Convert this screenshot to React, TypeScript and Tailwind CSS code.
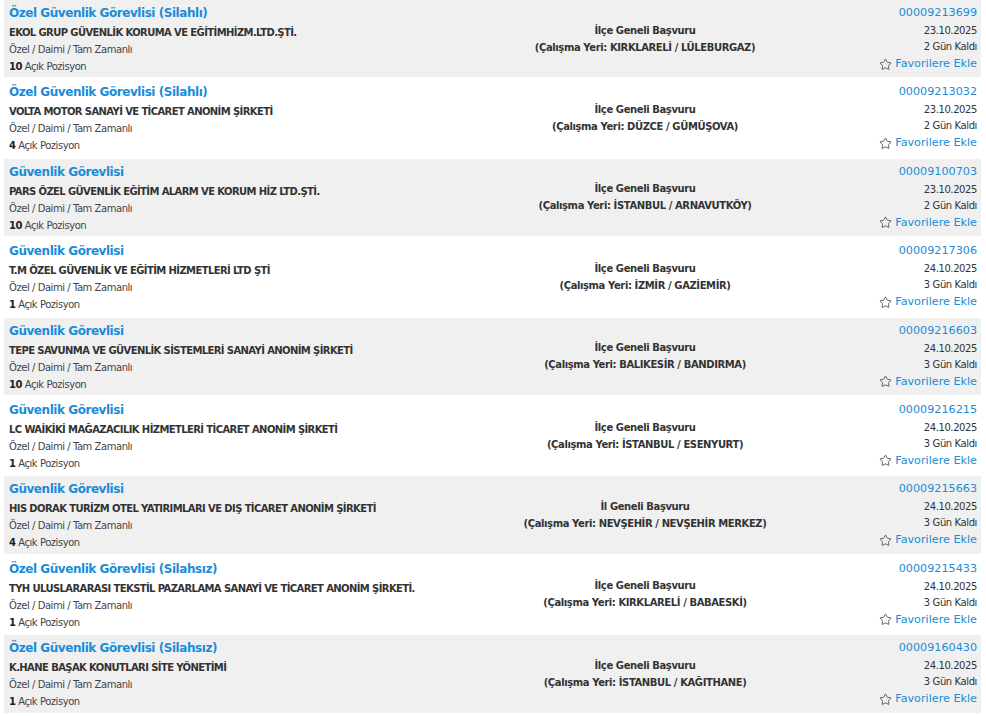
import { Star } from 'lucide-react';

const jobs = [
  { title: 'Özel Güvenlik Görevlisi (Silahlı)', company: 'EKOL GRUP GÜVENLİK KORUMA VE EĞİTİMHİZM.LTD.ŞTİ.', count: 10, scope: 'İlçe Geneli Başvuru', place: 'KIRKLARELİ / LÜLEBURGAZ', no: '00009213699', date: '23.10.2025', left: 2 },
  { title: 'Özel Güvenlik Görevlisi (Silahlı)', company: 'VOLTA MOTOR SANAYİ VE TİCARET ANONİM ŞİRKETİ', count: 4, scope: 'İlçe Geneli Başvuru', place: 'DÜZCE / GÜMÜŞOVA', no: '00009213032', date: '23.10.2025', left: 2 },
  { title: 'Güvenlik Görevlisi', company: 'PARS ÖZEL GÜVENLİK EĞİTİM ALARM VE KORUM HİZ LTD.ŞTİ.', count: 10, scope: 'İlçe Geneli Başvuru', place: 'İSTANBUL / ARNAVUTKÖY', no: '00009100703', date: '23.10.2025', left: 2 },
  { title: 'Güvenlik Görevlisi', company: 'T.M ÖZEL GÜVENLİK VE EĞİTİM HİZMETLERİ LTD ŞTİ', count: 1, scope: 'İlçe Geneli Başvuru', place: 'İZMİR / GAZİEMİR', no: '00009217306', date: '24.10.2025', left: 3 },
  { title: 'Güvenlik Görevlisi', company: 'TEPE SAVUNMA VE GÜVENLİK SİSTEMLERİ SANAYİ ANONİM ŞİRKETİ', count: 10, scope: 'İlçe Geneli Başvuru', place: 'BALIKESİR / BANDIRMA', no: '00009216603', date: '24.10.2025', left: 3 },
  { title: 'Güvenlik Görevlisi', company: 'LC WAİKİKİ MAĞAZACILIK HİZMETLERİ TİCARET ANONİM ŞİRKETİ', count: 1, scope: 'İlçe Geneli Başvuru', place: 'İSTANBUL / ESENYURT', no: '00009216215', date: '24.10.2025', left: 3 },
  { title: 'Güvenlik Görevlisi', company: 'HIS DORAK TURİZM OTEL YATIRIMLARI VE DIŞ TİCARET ANONİM ŞİRKETİ', count: 4, scope: 'İl Geneli Başvuru', place: 'NEVŞEHİR / NEVŞEHİR MERKEZ', no: '00009215663', date: '24.10.2025', left: 3 },
  { title: 'Özel Güvenlik Görevlisi (Silahsız)', company: 'TYH ULUSLARARASI TEKSTİL PAZARLAMA SANAYİ VE TİCARET ANONİM ŞİRKETİ.', count: 1, scope: 'İlçe Geneli Başvuru', place: 'KIRKLARELİ / BABAESKİ', no: '00009215433', date: '24.10.2025', left: 3 },
  { title: 'Özel Güvenlik Görevlisi (Silahsız)', company: 'K.HANE BAŞAK KONUTLARI SİTE YÖNETİMİ', count: 1, scope: 'İlçe Geneli Başvuru', place: 'İSTANBUL / KAĞITHANE', no: '00009160430', date: '24.10.2025', left: 3 },
];

export default function App() {
  return (
    <div className="min-h-[716px] bg-white px-[4px] pr-[5px] font-['DejaVu_Sans',sans-serif] text-[#333]">
      {jobs.map((job, i) => (
        <div
          key={job.no}
          className={`grid h-[77.4px] grid-cols-[488px_306px_1fr] mb-[2px] ${i % 2 === 0 ? 'bg-[#f0f0f0]' : 'bg-white'}`}
        >
          {/* left: title + company */}
          <div className="pl-[5px] pt-[2px]">
            <div className="text-[12px] font-bold leading-[22px] tracking-[-0.45px] text-[#1a8cd8] cursor-pointer">{job.title}</div>
            <div className="text-[10px] font-bold leading-[17px] tracking-[-0.6px] text-[#333]">{job.company}</div>
            <div className="text-[10px] leading-[17px] tracking-[-0.45px] text-[#444]">Özel / Daimi / Tam Zamanlı</div>
            <div className="text-[10px] leading-[17px] tracking-[-0.45px] text-[#444]">
              <b className="text-[#222]">{job.count}</b> Açık Pozisyon
            </div>
          </div>

          {/* middle: place */}
          <div className="flex flex-col items-center justify-center text-[10px] font-bold leading-[17px] tracking-[-0.4px] text-[#333]">
            <div>{job.scope}</div>
            <div>(Çalışma Yeri: {job.place})</div>
          </div>

          {/* right */}
          <div className="flex flex-col items-end pr-[4px] pt-[2px]">
            <div className="text-[11.2px] leading-[21px] text-[#1a8cd8]">{job.no}</div>
            <div className="text-[10px] leading-[16px] tracking-[-0.4px] text-[#333]">{job.date}</div>
            <div className="text-[10px] leading-[16px] tracking-[-0.4px] text-[#333]">{job.left} Gün Kaldı</div>
            <div className="flex items-center gap-[3px] text-[11.2px] leading-[18px] text-[#1a8cd8] cursor-pointer">
              <Star size={13} strokeWidth={1.4} className="text-[#333]" />
              Favorilere Ekle
            </div>
          </div>
        </div>
      ))}
    </div>
  );
}
